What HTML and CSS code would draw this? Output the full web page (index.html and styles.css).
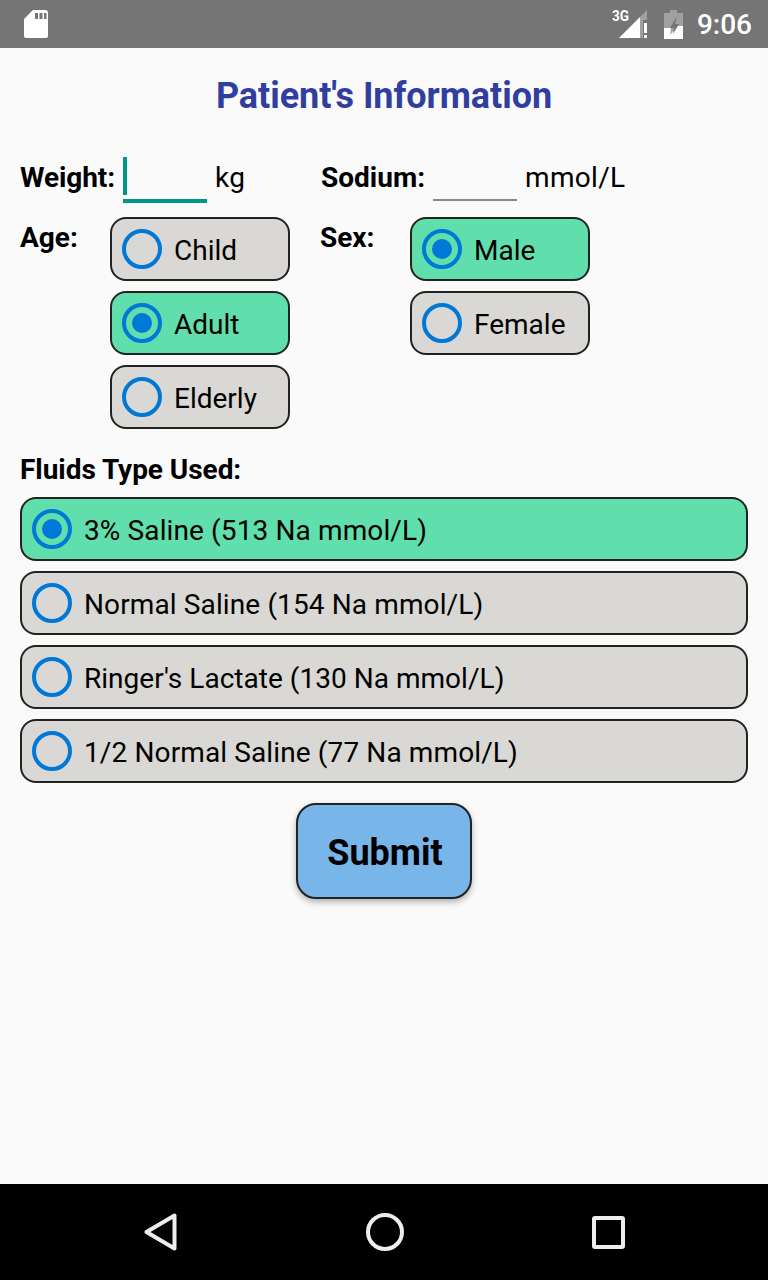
FILE: index.html
```html
<!DOCTYPE html>
<html lang="en">
<head>
  <meta charset="UTF-8">
  <title>Patient's Information</title>
  <link rel="stylesheet" href="styles.css">
</head>
<body>
  <div class="status-bar">
    <svg class="sd-icon" width="24" height="28" viewBox="0 0 24 28">
      <path d="M9 0H21a3 3 0 0 1 3 3V26a2 2 0 0 1-2 2H2a2 2 0 0 1-2-2V9z" fill="#fff"/>
      <path d="M11 3h3v6h-3zM15.500 3h3v6h-3zM20 3h2.500v6H20z" fill="#757575"/>
    </svg>
    <div class="status-right">
      <div class="signal">
        <span class="net-label">3G</span>
        <svg width="29" height="28" viewBox="0 0 29 28">
          <path d="M0 28L21 7V28z" fill="#fff"/>
          <path d="M21 7L28 0V10H24V28H21z" fill="#a0a0a0"/>
          <path d="M25 13h3v10h-3zM25 25h3v3h-3z" fill="#fff"/>
        </svg>
      </div>
      <svg class="battery" width="19" height="29" viewBox="0 0 19 29">
        <path d="M6 0h7v3h6v26H0V3h6z" fill="#a0a0a0"/>
        <path d="M0 29V18h7l-1 7 7-9h6v13z" fill="#fff"/>
        <path d="M13 6L6 18h4l-1 6 6-10h-4z" fill="#757575"/>
      </svg>
      <span class="clock">9:06</span>
    </div>
  </div>

  <div class="content">
    <h1 class="title">Patient's Information</h1>

    <div class="input-row">
      <div class="input-group weight-group">
        <span class="label">Weight:</span>
        <div class="text-input focused"></div>
        <span class="unit">kg</span>
      </div>
      <div class="input-group">
        <span class="label">Sodium:</span>
        <div class="text-input"></div>
        <span class="unit">mmol/L</span>
      </div>
    </div>

    <div class="choice-row">
      <div class="choice-group age-group">
        <span class="label">Age:</span>
        <div class="options">
          <div class="option"><span class="radio"></span>Child</div>
          <div class="option selected"><span class="radio"></span>Adult</div>
          <div class="option"><span class="radio"></span>Elderly</div>
        </div>
      </div>
      <div class="choice-group">
        <span class="label">Sex:</span>
        <div class="options">
          <div class="option selected"><span class="radio"></span>Male</div>
          <div class="option"><span class="radio"></span>Female</div>
        </div>
      </div>
    </div>

    <div class="label fluids-label">Fluids Type Used:</div>
    <div class="fluids">
      <div class="option selected"><span class="radio"></span>3% Saline (513 Na mmol/L)</div>
      <div class="option"><span class="radio"></span>Normal Saline (154 Na mmol/L)</div>
      <div class="option tight"><span class="radio"></span>Ringer's Lactate (130 Na mmol/L)</div>
      <div class="option"><span class="radio"></span>1/2 Normal Saline (77 Na mmol/L)</div>
    </div>

    <button class="submit-button">Submit</button>
  </div>

  <div class="nav-bar">
    <svg width="33" height="38" viewBox="0 0 33 38" fill="none" stroke="#eee" stroke-width="4" stroke-linejoin="round">
      <polygon points="30.5,2.5 30.5,35.5 2.5,19"/>
    </svg>
    <svg width="38" height="38" viewBox="0 0 38 38" fill="none" stroke="#eee" stroke-width="4">
      <circle cx="19" cy="19" r="17"/>
    </svg>
    <svg width="33" height="33" viewBox="0 0 33 33" fill="none" stroke="#eee" stroke-width="4" stroke-linejoin="round">
      <rect x="2" y="2" width="29" height="29" rx="1"/>
    </svg>
  </div>
</body>
</html>
```

FILE: styles.css
```css
body {
  font-family: Roboto, sans-serif;
  margin: 0;
  padding: 0;
  height: 1280px;
  display: flex;
  flex-direction: column;
  background-color: #fafafa;
  color: #000;
  overflow: hidden;
}

.status-bar {
  height: 48px;
  flex-shrink: 0;
  background-color: #757575;
  display: flex;
  justify-content: space-between;
  align-items: center;
  padding: 0 16px 0 24px;
}

.status-right {
  display: flex;
  align-items: center;
  color: #fff;
}

.signal {
  display: flex;
  position: relative;
  width: 29px;
  margin-right: 16px;
}

.signal svg {
  display: block;
}

.net-label {
  position: absolute;
  left: -8px;
  top: -3px;
  font-size: 15px;
  line-height: 18px;
  font-weight: 700;
  transform: scaleX(0.9);
}

.battery {
  margin-right: 14px;
}

.clock {
  font-size: 28px;
  font-weight: 500;
}

.content {
  flex: 1;
  display: flex;
  flex-direction: column;
  padding: 0 20px;
}

.title {
  margin: 26px 0 0;
  font-size: 36px;
  line-height: 44px;
  font-weight: 700;
  letter-spacing: -0.05px;
  color: #303f9f;
  text-align: center;
}

.label {
  font-size: 28px;
  font-weight: 700;
  line-height: 36px;
}

.input-row {
  display: flex;
  margin-top: 39px;
  height: 46px;
}

.input-group {
  display: flex;
  align-items: center;
  font-size: 28px;
}

.input-group .label,
.unit {
  margin-bottom: 4px;
}

.weight-group {
  width: 301px;
}

.weight-group .label {
  letter-spacing: -0.1px;
}

.text-input {
  width: 84px;
  height: 42px;
  margin: 0 8px 2px;
  border-bottom: 2px solid #8a8a8a;
}

.text-input.focused {
  height: 42px;
  margin-bottom: 0;
  border-bottom: 4px solid #009688;
  position: relative;
}

.text-input.focused::before {
  content: "";
  position: absolute;
  left: 0;
  top: 0;
  width: 4px;
  height: 38px;
  background-color: #009688;
}

.unit {
  line-height: 36px;
  letter-spacing: 0.3px;
}

.choice-row {
  display: flex;
  margin-top: 14px;
}

.choice-group {
  display: flex;
  align-items: flex-start;
}

.choice-group .label {
  width: 90px;
  margin-top: 3px;
}

.age-group {
  width: 300px;
}

.options {
  display: flex;
  flex-direction: column;
  gap: 10px;
  width: 180px;
}

.option {
  height: 64px;
  box-sizing: border-box;
  display: flex;
  align-items: center;
  gap: 12px;
  padding: 2px 0 0 10px;
  background-color: #d9d8d4;
  border: 2px solid #222;
  border-radius: 16px;
  font-size: 28px;
}

.option.selected {
  background-color: #60dfac;
}

.radio {
  width: 40px;
  height: 40px;
  margin-top: -2px;
  box-sizing: border-box;
  border: 4px solid #0078d7;
  border-radius: 50%;
  flex-shrink: 0;
  display: flex;
  align-items: center;
  justify-content: center;
}

.selected .radio::after {
  content: "";
  width: 20px;
  height: 20px;
  border-radius: 50%;
  background-color: #0078d7;
}

.fluids-label {
  margin-top: 23px;
  letter-spacing: -0.05px;
}

.fluids {
  display: flex;
  flex-direction: column;
  gap: 10px;
  margin-top: 9px;
  letter-spacing: 0.12px;
}

.fluids .tight {
  letter-spacing: 0.03px;
}

.submit-button {
  align-self: center;
  width: 176px;
  height: 96px;
  margin-top: 20px;
  padding: 3px 0 0 2px;
  background-color: #78b5e9;
  border: 2px solid #222;
  border-radius: 20px;
  box-shadow: 0 3px 6px rgba(0, 0, 0, 0.3);
  font-family: Roboto, sans-serif;
  font-size: 36px;
  font-weight: 700;
  color: #000;
}

.nav-bar {
  height: 96px;
  flex-shrink: 0;
  background-color: #000;
  display: flex;
  align-items: center;
  justify-content: space-between;
  padding: 0 143px 0 144px;
}
```
